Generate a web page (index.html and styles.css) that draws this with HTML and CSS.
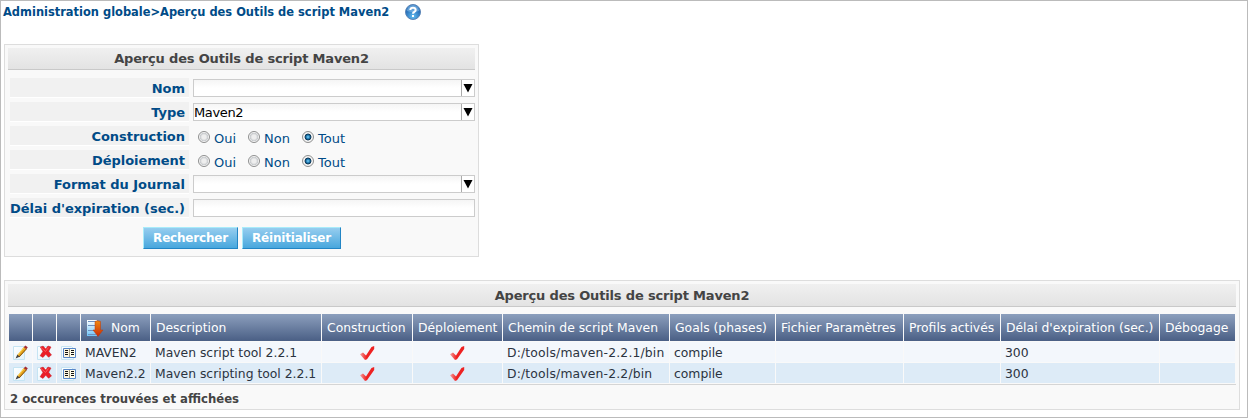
FILE: index.html
```html
<!DOCTYPE html>
<html lang="fr">
<head>
<meta charset="utf-8">
<title>Aperçu des Outils de script Maven2</title>
<link rel="stylesheet" href="styles.css">
</head>
<body>
<svg width="0" height="0" class="defs">
  <defs>
    <linearGradient id="page" x2="1" y2="1"><stop offset="0" stop-color="#fff"/><stop offset="1" stop-color="#e2f3fc"/></linearGradient>
    <linearGradient id="tick" x2="1"><stop offset="0" stop-color="#f7a0a0"/><stop offset=".45" stop-color="#ee2222"/></linearGradient>
    <linearGradient id="arrow" y2="1" x2="0"><stop offset="0" stop-color="#f08a10"/><stop offset="1" stop-color="#c92a08"/></linearGradient>
    <linearGradient id="lines" y2="1" x2="0"><stop offset="0" stop-color="#fff"/><stop offset="1" stop-color="#6ec4f8"/></linearGradient>
    <radialGradient id="ball" cy=".8"><stop offset="0" stop-color="#62bdf0"/><stop offset="1" stop-color="#2a74bd"/></radialGradient>
  </defs>
  <symbol id="edit" viewBox="0 0 16 16">
    <path d="M.500 1.500h11v13h-11z" fill="url(#page)" stroke="#c5e4f3"/>
    <path d="M4.200 10.200L10.800 2l2.800 2L6.400 12.200z" fill="#e7a51c"/>
    <path d="M6 12l7.300-8" stroke="#805014" stroke-width="1"/>
    <path d="M4.800 10L11 2.600" stroke="#ffd862" stroke-width="1"/>
    <path d="M10.800 2.200L12.300.6l2.500 1.700-1.400 2z" fill="#a52c30"/>
    <path d="M4.300 9.500l2.300 2.300-4 1.700z" fill="#444"/>
  </symbol>
  <symbol id="delete" viewBox="0 0 16 16">
    <path d="M.500 1.500h12v13h-12z" fill="url(#page)" stroke="#c5e4f3"/>
    <path d="M3.300 2l2.800-.9 2.600 2.800L11 1l3 1-2.400 4.300L14.500 10l-3 2.200L8.800 9.300 6 12.400l-2.900-1.600 2.800-4.300z" fill="#ea1f27" stroke="#c91d26" stroke-width=".5"/>
    <path d="M4 2.500l4.500 4 3-4" fill="none" stroke="#ff6767" stroke-width=".8"/>
  </symbol>
  <symbol id="view" viewBox="0 0 16 16">
    <path d="M.500 1.500h10l2 2v11h-12z" fill="url(#page)" stroke="#c5e4f3"/>
    <path d="M2.500 3.500h12v9h-12z" fill="#fff" stroke="#5787c9"/>
    <path d="M3 4h5v8H3z" fill="#fbf5df"/><path d="M8 4h6v8H8z" fill="#fffceb"/>
    <path d="M8.500 4v8" stroke="#a39b81"/>
    <path d="M4 5.500h3M4 7.500h3M4 9.500h3M10 5.500h3M10 7.500h3M10 9.500h3" stroke="#111"/>
  </symbol>
  <symbol id="check" viewBox="0 0 16 16">
    <path d="M1 9.200L4 7.500l3 3L12.500 2 15.200 1v3L8 14.300l-2 .7z" fill="url(#tick)"/>
  </symbol>
</svg>

<div class="frame">
  <div class="crumb">
    <span class="crumb-text">Administration globale&gt;Aperçu des Outils de script Maven2</span>
    <svg class="help" viewBox="0 0 16 16"><circle cx="8" cy="8" r="7.500" fill="url(#ball)" stroke="#5b84b5"/><path d="M2 7a6 6 0 0 1 12 0q-6 2-12 0z" fill="#91c5ec" opacity=".55"/><path d="M5.300 6Q5.500 3.800 8 3.800T10.700 6Q10.700 7.200 9.200 8 8 8.600 8 9.800" fill="none" stroke="#fff" stroke-width="2"/><path d="M7 11h2v2H7z" fill="#fff"/></svg>
  </div>

  <form class="panel search">
    <h2 class="title">Aperçu des Outils de script Maven2</h2>
    <div class="fields">
      <label class="label">Nom</label>
      <div class="box"><span class="value"></span><svg class="drop" viewBox="0 0 12 16"><path d="M1.500 4h9L6 12.500z"/></svg></div>
      <label class="label">Type</label>
      <div class="box"><span class="value">Maven2</span><svg class="drop" viewBox="0 0 12 16"><path d="M1.500 4h9L6 12.500z"/></svg></div>
      <label class="label">Construction</label>
      <div class="radios"><span class="option"><i class="radio"></i>Oui</span><span class="option"><i class="radio"></i>Non</span><span class="option"><i class="radio on"></i>Tout</span></div>
      <label class="label">Déploiement</label>
      <div class="radios"><span class="option"><i class="radio"></i>Oui</span><span class="option"><i class="radio"></i>Non</span><span class="option"><i class="radio on"></i>Tout</span></div>
      <label class="label">Format du Journal</label>
      <div class="box"><span class="value"></span><svg class="drop" viewBox="0 0 12 16"><path d="M1.500 4h9L6 12.500z"/></svg></div>
      <label class="label">Délai d'expiration (sec.)</label>
      <div class="box"></div>
    </div>
    <div class="actions"><button type="button" class="btn find">Rechercher</button><button type="button" class="btn reset">Réinitialiser</button></div>
  </form>

  <section class="panel results">
    <h2 class="title">Aperçu des Outils de script Maven2</h2>
    <table class="grid">
      <colgroup><col class="c-icon"><col class="c-icon"><col class="c-icon"><col class="c-name"><col class="c-desc"><col class="c-build"><col class="c-deploy"><col class="c-path"><col class="c-goals"><col class="c-file"><col class="c-profiles"><col class="c-delay"><col class="c-debug"></colgroup>
      <thead>
        <tr><th></th><th></th><th></th>
          <th><span class="sorted"><svg class="sort" viewBox="0 0 18 18"><path d="M1 1h10v16H1z" fill="url(#lines)"/><path d="M2 2.500h8M2 6.500h8M2 11.500h8M2 15.500h8" stroke="#6d90c0"/><path d="M9 2.500q2-1.500 5.500 0V11H17l-5 6.500L7 11h2z" fill="url(#arrow)" stroke="#bd3b0b" stroke-width=".5"/></svg>Nom</span></th>
          <th>Description</th><th>Construction</th><th>Déploiement</th><th>Chemin de script Maven</th><th>Goals (phases)</th><th>Fichier Paramètres</th><th>Profils activés</th><th>Délai d'expiration (sec.)</th><th>Débogage</th></tr>
      </thead>
      <tbody>
        <tr class="odd"><td class="ico"><svg><use href="#edit"/></svg></td><td class="ico"><svg><use href="#delete"/></svg></td><td class="ico"><svg><use href="#view"/></svg></td><td>MAVEN2</td><td>Maven script tool 2.2.1</td><td class="ico"><svg><use href="#check"/></svg></td><td class="ico left"><svg><use href="#check"/></svg></td><td class="path">D:/tools/maven-2.2.1/bin</td><td>compile</td><td></td><td></td><td>300</td><td></td></tr>
        <tr class="even"><td class="ico"><svg><use href="#edit"/></svg></td><td class="ico"><svg><use href="#delete"/></svg></td><td class="ico"><svg><use href="#view"/></svg></td><td>Maven2.2</td><td>Maven scripting tool 2.2.1</td><td class="ico"><svg><use href="#check"/></svg></td><td class="ico left"><svg><use href="#check"/></svg></td><td class="path">D:/tools/maven-2.2/bin</td><td>compile</td><td></td><td></td><td>300</td><td></td></tr>
      </tbody>
    </table>
    <p class="count">2 occurences trouvées et affichées</p>
  </section>
</div>
</body>
</html>
```
FILE: styles.css
```css
* { box-sizing: border-box; }
body { margin: 0; background: #fff; font-family: Verdana, "DejaVu Sans", sans-serif; font-size: 12px; color: #333; }
.defs { display: block; }
.frame { width: 1248px; height: 418px; border: 1px solid #bbb; padding-left: 3px; overflow: hidden; }
.crumb { display: flex; height: 43px; margin-left: -1px; padding-top: 3px; }
.crumb-text { width: 402px; font-weight: bold; font-size: 11.45px; line-height: 17px; color: #004b87; white-space: nowrap; }
.help { width: 16px; height: 16px; }
.panel { border: 1px solid #ddd; background: #f9f9f9; padding: 3px; }
.title { margin: 0; height: 22px; border-bottom: 1px solid #c9c9c9; background: linear-gradient(#f0f0f0, #e3e3e3); font-size: 13px; line-height: 21px; letter-spacing: -.17px; text-align: center; color: #444; white-space: nowrap; }

.search { width: 475px; height: 213px; }
.fields { display: grid; grid-template-columns: 179px 282px; column-gap: 4px; row-gap: 4px; grid-auto-rows: 20px; padding: 8px 0 0 2px; }
.label { border-bottom: 1px solid #fff; background: #f1f1f1; padding-right: 4px; font-size: 13px; font-weight: bold; line-height: 21px; letter-spacing: -.03px; text-align: right; color: #004b87; white-space: nowrap; }
.box { display: flex; height: 18px; margin-top: 1px; border: 1px solid #ccc; background: linear-gradient(#f5f5f5, #fff 8px); }
.value { flex: 1; font-size: 13px; line-height: 17px; letter-spacing: -.35px; color: #000; }
.drop { width: 13px; height: 16px; border-left: 1px solid #aaa; background: #fff; }
.radios { display: flex; padding-left: 5px; color: #004b87; font-size: 13px; line-height: 25px; }
.option { display: flex; width: 50px; }
.option:nth-child(2) { width: 54px; }
.radio { width: 12px; height: 12px; margin: 5px 4px 0 0; border: 1px solid #8e8f8f; border-radius: 50%; background: radial-gradient(circle, #eee 0 2px, #c5c8cb 4px, #f4f4f4 4.500px); }
.radio.on { background: radial-gradient(circle at 5px 5px, #7cd5ff 0, #166ea4 2px, #10324e 3px, #f4f4f4 3.800px); }
.actions { display: flex; gap: 4px; padding: 9px 0 0 135px; }
.btn { height: 22px; padding: 0; border: 1px solid; border-color: #a8ebfa #2285c5 #2285c5 #a8ebfa; background: linear-gradient(#96cdef, #48a7dd); color: #fff; font: bold 12px/20px Verdana, "DejaVu Sans", sans-serif; letter-spacing: -.2px; }
.find { width: 95px; }
.reset { width: 99px; }

.results { width: 1236px; height: 130px; margin-top: 23px; }
.results .title { height: 23px; line-height: 23px; }
.grid { width: 1228px; margin-top: 6px; table-layout: fixed; border-spacing: 1px; border-bottom: 1px solid #d5d5d5; font-size: 12.36px; }
.grid th { height: 27px; padding: 0 5px; background: linear-gradient(#8c9fbd, #4a5f85); color: #fff; font-weight: normal; text-align: left; white-space: nowrap; }
.grid td { height: 20px; padding: 2px 4px 0; line-height: 18px; white-space: nowrap; color: #2b3340; }
.grid .path { letter-spacing: .17px; }
.odd td { background: #f3f7fc; }
.even td { background: #ddebf7; }
.grid .ico { padding: 2px 0 0; text-align: center; }
.grid .left { padding-right: 2px; }
.ico svg { display: block; width: 16px; height: 16px; margin: 0 auto; }
.sorted { display: flex; align-items: center; gap: 7px; }
.sort { width: 18px; height: 18px; }
.c-icon { width: 23px; }
.c-name { width: 69px; }
.c-desc { width: 170px; }
.c-build { width: 90px; }
.c-deploy { width: 89px; }
.c-path { width: 166px; }
.c-goals { width: 105px; }
.c-file { width: 127px; }
.c-profiles { width: 96px; }
.c-delay { width: 158px; }
.c-debug { width: 75px; }
.count { margin: 5px 0 0 2px; font-size: 11.7px; font-weight: bold; line-height: 19px; color: #444; }
```
